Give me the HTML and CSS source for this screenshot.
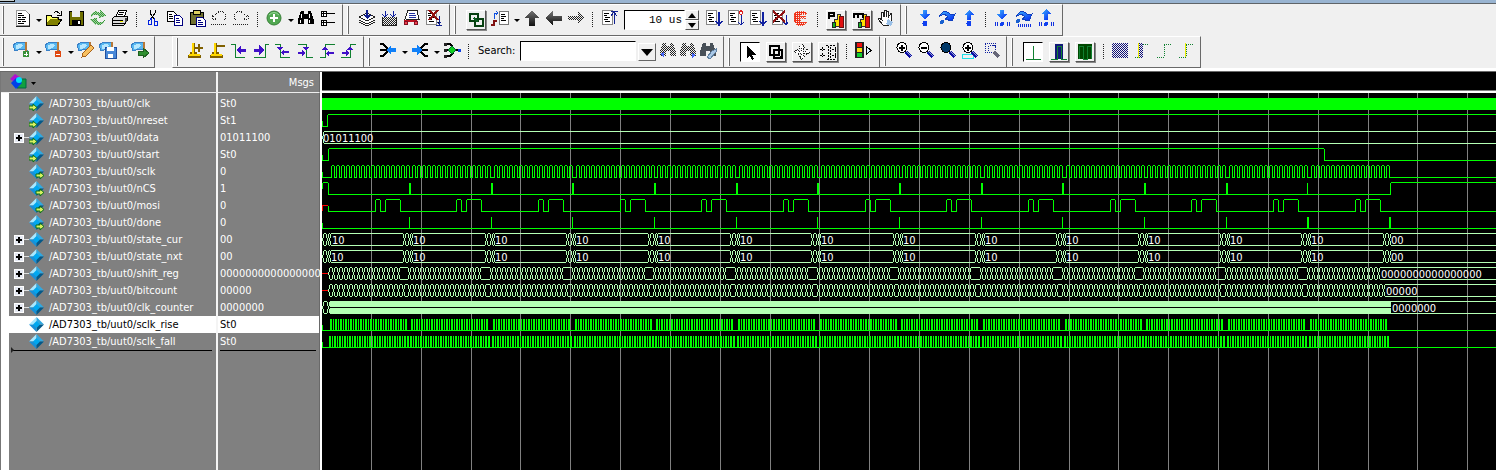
FILE: index.html
```html
<!DOCTYPE html>
<html lang="en">
<head>
<meta charset="utf-8">
<title>Wave</title>
<link rel="stylesheet" href="styles.css">
</head>
<body>
<svg class="defs" aria-hidden="true">
  <defs>
    <pattern id="dither" width="2" height="2" patternUnits="userSpaceOnUse"><path d="M0 0h1v1h-1zM1 1h1v1h-1z" fill="#222"/></pattern>
    <pattern id="dither-green" width="2" height="2" patternUnits="userSpaceOnUse"><path d="M0 0h1v1h-1zM1 1h1v1h-1z" fill="#3a9a3a"/></pattern>
    <pattern id="dither-red" width="2" height="2" patternUnits="userSpaceOnUse"><path d="M0 0h2v1h-1v1h-1z" fill="#f03018"/></pattern>
    <pattern id="dither-navy" width="2" height="2" patternUnits="userSpaceOnUse"><path d="M0 0h1v1h-1zM1 1h1v1h-1z" fill="#101078"/></pattern>
    <linearGradient id="steel" x2="0" y2="1"><stop offset="0" stop-color="#777"/><stop offset="1" stop-color="#111"/></linearGradient>
    <linearGradient id="azure" x2="1" y2="1"><stop offset="0" stop-color="#40b8ff"/><stop offset="1" stop-color="#0020f0"/></linearGradient>
  </defs>
</svg>
<div class="window-edge"><span class="tab"></span></div>
<header class="toolbars">
  <div class="bar" id="bar-main"></div>
  <div class="bar" id="bar-wave"></div>
</header>
<main class="wave-window">
  <section class="signals">
    <table>
      <colgroup><col class="gutter"><col class="names"><col class="values"></colgroup>
      <thead>
        <tr>
          <th colspan="2" class="head-name">
            <button class="object-menu" aria-label="Object filter">
              <svg width="28" height="18" viewBox="0 0 28 18">
                <path d="M1 6L6 1l6 4-4 6z" fill="#b010d0"/><path d="M9 6h8v9H8z" fill="#10a040" stroke="#064"/>
                <path d="M2 10l5-5 6 5-6 6z" fill="#0040e8"/><circle cx="10" cy="7" r="3" fill="#00e0ff"/>
                <path d="M22 9h5l-2.500 3z" fill="#000"/>
              </svg>
            </button>
          </th>
          <th class="head-value">Msgs</th>
        </tr>
      </thead>
      <tbody id="rows"></tbody>
    </table>
    <div class="list-end"><div class="end-name"><span class="marker"></span></div><div class="end-value"></div></div>
  </section>
  <section class="waves">
    <div class="wave-head"></div>
    <svg id="plot" class="plot" role="img" aria-label="Waveforms"></svg>
  </section>
</main>
<script src="app.js"></script>
</body>
</html>
```
FILE: styles.css
```css
* { box-sizing: border-box; }
body {
  margin: 0;
  height: 100vh;
  display: flex;
  flex-direction: column;
  background: #f0f0f0;
  font: 11px/17px "DejaVu Sans Condensed", "Noto Sans", sans-serif;
  color: #000;
  overflow: hidden;
}
button { font: inherit; color: inherit; border: 0; padding: 0; background: none; }
svg { display: block; flex: none; }
.defs { width: 0; height: 0; }

.window-edge { height: 4px; background: #99b4d1; border-bottom: 1px solid #5f6468; flex: none; }
.tab { display: block; width: 15px; height: 2px; background: #c8d0d0; border-right: 1px solid #000; border-bottom: 1px solid #000; }

.toolbars { flex: none; border-bottom: 1px solid #696969; box-shadow: inset 0 -3px #fff; padding-bottom: 3px; }
.bar { display: flex; height: 32px; }
.group {
  display: flex;
  align-items: center;
  flex: none;
  padding: 0 3px 0 4px;
  border: solid;
  border-width: 1px 1px 1px 0;
  border-color: #fff #696969 #696969 #fff;
}
.group.first { padding-left: 2px; }
.group.roomy { padding-right: 5px; }
.group.spaced { margin-left: 17px; border-left-width: 1px; padding-left: 3px; }
.grip { width: 2px; height: 28px; border-left: 1px solid #fff; border-right: 1px solid #696969; margin-right: 7px; }
.group.spaced .grip { margin-right: 6px; }
.tool { width: 22px; height: 24px; padding: 0 1px 4px; flex: none; }
.tool.narrow { width: 20px; padding: 0 0 4px; }
.raised {
  width: 20px; height: 20px; margin: 0 3px; flex: none;
  border: 1px solid; border-color: #fff #555 #555 #fff;
  box-shadow: 1px 1px #888;
}
.raised svg { margin: -1px; }
.raised.sunken { background: #fff; border-color: #000 #fff #fff #000; box-shadow: none; }
.caret { width: 10px; height: 20px; padding: 0 2px 0 3px; flex: none; }
.caret::before { content: ""; display: block; border: solid transparent; border-width: 3px 3px 0; border-top-color: #000; width: 0; }
.sep { width: 1px; height: 16px; margin: 0 5px; flex: none; background: repeating-linear-gradient(#222 0 1px, transparent 1px 2px); }
.field { height: 20px; border: 1px solid; border-color: #000 #fff #fff #000; background: #fff; padding: 0 2px; border-radius: 0; }
.duration { width: 61px; margin-left: 4px; font: 11px "Liberation Mono", monospace; text-align: right; }
.spin { width: 14px; margin: 0 3px 0 0; display: flex; flex-direction: column; }
.spin button { height: 10px; border: 1px solid; border-color: #fff #555 #555 #fff; display: grid; place-items: center; }
.search-label { margin: 0 5px 4px 4px; }
.search { width: 116px; margin: 0 2px 2px 0; }
.drop { width: 18px; height: 18px; border: 1px solid; border-color: #fff #666 #666 #fff; margin-right: 2px; display: grid; place-items: center; }

.wave-window { flex: 1; display: flex; min-height: 0; background: #808080; }
.signals { width: 322px; flex: none; display: flex; flex-direction: column; border-left: 1px solid #777; border-right: 2px solid #fff; color: #fff; }
table { border-collapse: separate; border-spacing: 0; table-layout: fixed; width: 100%; }
th, td { padding: 0; font-weight: normal; text-align: left; height: 17px; white-space: nowrap; }
.gutter { width: 8px; }
.names { width: 209px; }
th { height: 21px; border-bottom: 1px solid #eee; }
th, td.name, td.value { border-right: 2px solid #f4f4f4; }
td.value, th.head-value { border-right: 1px solid #696969; }
.head-value { text-align: right; padding-right: 5px; }
.object-menu { display: block; margin-left: 8px; }
td.edge { background: #fff; }
tbody tr:first-child td { height: 19px; padding-top: 2px; }
.cell { display: flex; align-items: center; height: 17px; }
.expander { width: 10px; height: 10px; margin-left: 5px; border: 1px solid #fff; background: #e4e8f2; display: grid; place-items: center; }
.link { width: 5px; height: 1px; background: #ddd; }
.blank { width: 20px; }
.cell .symbol { margin-right: 4px; }
tbody td.value { padding-left: 2px; }
.selected td { background: #fff; color: #000; }
.list-end { flex: 1; display: flex; border-left: 8px solid #fff; }
.end-name { width: 209px; border-right: 2px solid #f4f4f4; padding: 0 4px 0 2px; }
.marker { display: block; height: 1px; background: #000; }
.marker::before { content: ""; display: block; width: 0; border: solid transparent; border-width: 3px 0 3px 3px; border-left-color: #222; position: relative; top: -3px; }
.end-value { flex: 1; border-right: 1px solid #696969; padding: 0 3px 0 2px; }
.end-value::before { content: ""; display: block; height: 1px; background: #000; }

.waves { flex: 1; min-width: 0; background: #000; display: flex; flex-direction: column; }
.wave-head { height: 21px; flex: none; border-bottom: 2px solid #fff; box-shadow: inset 0 -1px #808080; }
.plot { flex: 1; width: 100%; min-height: 0; }
.plot text { font: 11px "DejaVu Sans Condensed", "Noto Sans", sans-serif; fill: #fff; }
```
FILE: app.js
```js
const page = '<path d="M3 2h10v14H3z" fill="#fff" stroke="#888"/><path d="M5 5h5M5 7h3M6 9h5M5 11h4M6 13h5" stroke="#000"/>';
const waveBlue = '<path d="M1 5l5-3 8 1 1 7-6-1-6 2z" fill="#58b8f0" stroke="#3880c8"/><path d="M4 5l4-1 3 1-2 3-5 1z" fill="#b8e8ff"/><path d="M13 2h2v9l-2 3z" fill="#b87838"/>';
const lens = f => `<circle cx="8" cy="7.500" r="5" fill="${f}" stroke="#000"/><path d="M12 12l5 5" stroke="#1010a8" stroke-width="3"/><path d="M12 11l5 5" stroke="#9ac" stroke-width="1"/>`;
const binoc = f => `<path d="M5 3h3v3h4V3h3l3 9v4h-6v-5H8v5H2v-4z" fill="${f}"/>`;
const magic = s => `<path d="M8 2h4v4h3l-5 6-5-6h3z" fill="url(#azure)"/>${s}`;
const dots = '<path d="M3 14v4M5 14v4M15 14v4M17 14v4" stroke="#1030e0"/>';
const edge = d => `<path d="${d}" fill="none" stroke="#108030"/>`;
const purple = d => `<path d="${d}" fill="#4010c8"/>`;
const bars = l => `<path d="M8 16V9h3V4h3v12z" fill="#ffe000" stroke="#333"/><path d="M6 12h3v5H6z" fill="#10b020" stroke="#222"/><path d="M13 6h4v11h-4z" fill="#e01010" stroke="#611"/>${l}`;

const icons = {
  doc: '<path d="M4 2h9l4 4v11H4z" fill="#fff" stroke="#999"/><path d="M17 6v12H4" stroke="#222" fill="none"/><path d="M6 5h4M6 7h6M6 9h3M10 9h4M6 11h7M6 13h3M10 13h4M6 15h6" stroke="#000"/>',
  open: '<path d="M2 17V7h5l1 2h6v2h4l-4 6z" fill="#808000" stroke="#000"/><path d="M3 14V8h4l1 2h5v1H6z" fill="#ffff60"/><path d="M10 5q3-3 6 1M17 3v4h-4" stroke="#000" fill="none"/>',
  save: '<path d="M3 3h14v14H3z" fill="#707000" stroke="#000"/><path d="M6 3h8v6H6z" fill="#eee"/><path d="M6 12h9v5H6z" fill="#000"/><path d="M12 13h2v3h-2z" fill="#fff"/>',
  refresh: '<path d="M3 7q4-6 9-2V2l6 6-7 2V8Q8 5 3 9zM2 11l7-1v3q4 3 8-1-3 7-9 4v2z" fill="#9fd09f"/><path d="M3 7q4-6 9-2V2l6 6-7 2V8Q8 5 3 9zM2 11l7-1v3q4 3 8-1-3 7-9 4v2z" fill="url(#dither-green)"/>',
  print: '<path d="M6 8l3-6h8l-3 7z" fill="#fff" stroke="#000"/><path d="M9 4h5M8 6h5" stroke="#000"/><path d="M2 11l3-3h12v5l-3 4H2z" fill="#ddd" stroke="#000"/><path d="M3 12h10M3 15h11" stroke="#000"/><path d="M10 13h3v1h-3z" fill="#ee0"/><path d="M15 10h2v4h-2z" fill="#444"/>',
  cut: '<path d="M7 2v3l4 6M12 2v3l-4 6" stroke="#000" fill="none"/><path d="M8 10l-1 2H5v4h3v-5zM11 10l1 3h2v4h-3v-5z" stroke="#0020e0" fill="none"/>',
  copy: '<path d="M2 3h6l3 3v7H2z" fill="#fff" stroke="#000"/><path d="M4 6h3M4 8h4M4 10h4" stroke="#000"/><path d="M9 7h5l3 3v7H9z" fill="#fff" stroke="#000080"/><path d="M11 10h3M11 12h4M11 14h4" stroke="#000080"/>',
  paste: '<path d="M3 4h13v12H3z" fill="#707030" stroke="#000"/><path d="M6 2h7v4H6z" fill="#ddd060" stroke="#000"/><path d="M9 9h6l3 3v6H9z" fill="#fff" stroke="#000080"/><path d="M11 12h3M11 14h5M11 16h5" stroke="#000080"/>',
  undo: '<path d="M3 7l4 4H3zM6 7q5-6 9-2t-1 8M2 16h16" fill="none" stroke="#222" stroke-dasharray="1 1"/>',
  redo: '<path d="M17 7l-4 4h4zM14 7Q9 1 5 5t1 8M2 16h16" fill="none" stroke="#222" stroke-dasharray="1 1"/>',
  add: '<g shape-rendering="auto"><circle cx="10" cy="10" r="7" fill="#52a852" stroke="#388038"/><path d="M5 7q5-5 10 0" stroke="#9d9" fill="none"/></g><path d="M10 6v8M6 10h8" stroke="#fff" stroke-width="2"/>',
  find: binoc('#000') + '<path d="M5 6v4M4 12v3M13 6v4M13 12v3" stroke="#fff"/>',
  expand: '<path d="M3 3h5v5H3zM3 12h5v5H3z" fill="#fff" stroke="#000"/><path d="M8 5h9M8 14h9M4 5h4M5 4v4M4 14h4M5 13v4" stroke="#000"/>',
  compile: '<path d="M2 9l8-4 8 4-8 4zM2 12l8 4 8-4M2 14l8 4 8-4" fill="#fff" stroke="#222"/><path d="M9 2h2v5h3l-4 4-4-4h3z" fill="#102090"/>',
  compileAll: '<path d="M3 9h14v8H3z" fill="url(#dither)"/><path d="M3 9v8h14V9" stroke="#222" fill="none"/><path d="M6 3v5M14 3v5M3 6l3 3 3-3M11 6l3 3 3-3" stroke="#1020a0" fill="none"/>',
  simulate: '<path d="M7 2h9l2 9H6L3 14z" fill="#fff" stroke="#222"/><path d="M8 5h6M8 7h7M8 9h7" stroke="#2030a0"/><path d="M3 13h13" stroke="#c01020" stroke-width="2"/><circle cx="5" cy="15" r="2" fill="#f04050" stroke="#801020"/><circle cx="15" cy="15" r="2" fill="#f04050" stroke="#801020"/>',
  endSim: page + '<path d="M16 8v9M13 17h6M14 14l2 2 2-2" stroke="#102090"/><path d="M6 2l9 10M15 2L6 12" stroke="#901010" stroke-width="2"/>',
  env: '<path d="M4 4h8v7H4zM9 9h8v7H9z" stroke="#064010" stroke-width="2" fill="none"/><path d="M8 8l4 4" stroke="#0a6020" stroke-width="2"/>',
  restart: '<path d="M9 3h9v13H9z" fill="#fff" stroke="#777"/><path d="M11 6h4M11 8h5M11 10h3M11 12h5" stroke="#000"/><path d="M1 17h3v-4h3" stroke="#801010" stroke-width="2" fill="none"/><path d="M4 11V5h4M6 3l2 2-2 2" stroke="#1050e0" fill="none"/>',
  up: '<path d="M10 2l7 8h-4v8H7v-8H3z" fill="url(#steel)"/>',
  left: '<path d="M1 10l8-7v5h9v5H9v4z" fill="url(#steel)"/>',
  right: '<path d="M18 10l-6-6v4H2v4h10v4z" fill="url(#dither)"/>',
  runLen: page + '<path d="M12 3h7M12 8l3-4 3 4M15 4v12" stroke="#102090" fill="none"/>',
  run: page + '<path d="M16 4v12M13 13l3 4 3-4" stroke="#1020a0" stroke-width="1.500" fill="none"/>',
  runCont: page + '<path d="M16 7v10M13 14l3 3 3-3" stroke="#1020a0" fill="none"/><path d="M16 2l2 3-2 2-2-2z" fill="#fff" stroke="#e02020"/>',
  breakSim: page + '<path d="M17 7v9M14 13l3 4 2-3" stroke="#1020a0" fill="none"/><path d="M4 3l12 11M16 3L4 14" stroke="#901010" stroke-width="2"/>',
  stop: '<path d="M6 3h7l3 3h-6L8 8h6v2H8l2 4h6l-3 3H6l-3-3V6z" fill="url(#dither-red)" stroke="#f05030" stroke-dasharray="1 1"/>',
  perf: bars('<path d="M3 9V3h5v3H4" stroke="#000" stroke-width="2" fill="none"/>'),
  mem: bars('<path d="M2 8V4h9v4M6 4v4" stroke="#000" stroke-width="2" fill="none"/>'),
  hand: '<path d="M7 17l-5-6 1-1 3 2L5 4h2l1 5V2h2v7l1-6h2l-1 7 3-5 1 1-1 8-3 4z" fill="#fff" stroke="#222"/><path d="M12 11l5 3-2 4-5-2z" fill="#9ac0e8"/>',
  into: magic('<circle cx="10" cy="15.500" r="2.500" fill="#1040f0"/>'),
  over: '<path d="M2 9Q7-1 14 7l4-1-3 7-7-2 3-2Q7 4 2 9z" fill="url(#azure)" stroke="#1040c0"/><circle cx="5" cy="14" r="2" fill="#1860d0"/>',
  out: '<path d="M10 2l5 5h-3v5H8V7H5z" fill="url(#azure)"/><circle cx="10" cy="15.500" r="2.500" fill="#1040f0"/>',
  into2: magic('<circle cx="10" cy="16" r="2" fill="#1040f0"/>' + dots),
  over2: '<path d="M2 9Q7-1 14 7l4-1-3 7-7-2 3-2Q7 4 2 9z" fill="url(#azure)" stroke="#1040c0"/><circle cx="4" cy="13" r="2" fill="#1860d0"/><path d="M4 17h14" stroke="#1030e0" stroke-width="3" stroke-dasharray="1 1"/>',
  out2: '<path d="M10 1l5 5h-3v6H8V6H5z" fill="url(#azure)"/><circle cx="10" cy="16" r="2" fill="#1040f0"/>' + dots,
  wAdd: waveBlue + '<circle cx="14" cy="14" r="3.500" fill="#389038"/><path d="M14 12v4M12 14h4" stroke="#fff"/>',
  wDel: waveBlue + '<circle cx="14" cy="14" r="3.500" fill="#e04810"/><path d="M12 14h4" stroke="#fff"/>',
  wEdit: waveBlue + '<path d="M6 17l1-4 8-8 3 3-8 8z" fill="#f8c060" stroke="#a86018"/>',
  wSave: waveBlue + '<path d="M7 7h11v11H7z" fill="#4888d8" stroke="#2050a0"/><path d="M9 7h7v4H9zM10 14h5v4h-5z" fill="#fff"/>',
  wGo: waveBlue + '<path d="M8 11h5V8l6 5-6 5v-3H8z" fill="#309030" stroke="#206020"/>',
  curAdd: '<path d="M8 3v11M3 16h13M5 13h7" stroke="#806000" stroke-width="3"/><path d="M8 3v11M4 15h11" stroke="#ffd800" stroke-width="2"/><path d="M9 8h9M14 4v8" stroke="#806000" stroke-width="2"/>',
  curDel: '<path d="M8 3v11M3 16h13M5 13h7" stroke="#806000" stroke-width="3"/><path d="M8 3v11M4 15h11" stroke="#ffd800" stroke-width="2"/><path d="M10 6h8" stroke="#806000" stroke-width="2"/>',
  prevEdge: edge('M2 4h4v13h10') + purple('M7 10l5-5v4h5v3h-5v3z'),
  nextEdge: edge('M3 17h11V4h4') + purple('M13 10L8 5v4H3v3h5v3z'),
  prevFall: edge('M2 4h5v13h10') + purple('M8 12l3-3v2h5v2h-5v3zM4 7h6l-3 4z'),
  nextFall: edge('M3 4h8v13h7') + purple('M10 13l-3-3v2H3v2h4v3zM8 7h6l-3 4z'),
  prevRise: edge('M3 17h5V4h10') + purple('M9 13l3-3v2h5v2h-5v3zM5 10h6L8 6z'),
  nextRise: edge('M2 17h9V4h6') + purple('M10 13l-3-3v2H3v2h4v3zM8 10h6l-3-4z'),
  drivers: '<path d="M2 4h3l4 4v4l-4 4H2M2 10h7" stroke="#000" stroke-width="2" fill="none"/><path d="M8 10l5-5v3h5v4h-5v3z" fill="#1080f8"/>',
  readers: '<path d="M18 4h-3l-4 4v4l4 4h3M11 10h7" stroke="#000" stroke-width="2" fill="none"/><path d="M12 10L7 5v3H2v4h5v3z" fill="#1080f8"/>',
  trace: '<path d="M4 4h4l3 3M4 10h5M4 16h4l3-3M13 10h4" stroke="#000" fill="none" stroke-width="2"/><path d="M2 3h3v3H2zM2 9h3v3H2zM2 15h3v3H2z" fill="#222"/><path d="M10 6l4 4-4 4-4-4z" fill="#10d020" stroke="#063"/><path d="M16 9h3v3h-3z" fill="#1040e0"/>',
  findPrev: binoc('url(#dither)') + '<path d="M2 14l4-2v5z" fill="#4868f8"/>',
  findNext: binoc('url(#dither)') + '<path d="M18 15l-4-2v5z" fill="#4868f8"/>',
  findOpt: binoc('#485058') + '<path d="M9 17l5-6 4-2v3l-6 7z" fill="#a8c8e8" stroke="#6080a0"/>',
  select: '<path d="M7 4v12l3-2 2 4 2-1-2-4h4z" fill="#000"/>',
  zoomMode: '<path d="M4 4h9v9H4zM8 8h8v8H8z" fill="none" stroke="#000" stroke-width="2"/><path d="M12 16h5v-4z"/>',
  pan: '<path d="M10 2l3 4h-2v3h3V7l4 3-4 3v-2h-3v3h2l-3 4-3-4h2v-3H6v2l-4-3 4-3v2h3V6H7z" fill="#fff" stroke="#222" stroke-dasharray="1 1"/>',
  edit: '<path d="M8 3h2v14H8M12 3h5M12 17h5M12 5v12M17 5v12M2 7h5M4 5v4M2 13h5M4 11v4M14 7h4M14 13h4" fill="none" stroke="#000" stroke-dasharray="2 1"/>',
  light: '<path d="M2 2h9v16H2z" fill="#222"/><circle cx="6.500" cy="5" r="2.500" fill="#f01010"/><circle cx="6.500" cy="10" r="2.500" fill="#f8e010"/><circle cx="6.500" cy="15" r="2.500" fill="#10d030"/><path d="M13 6v9l5-4.500z" fill="#d8f0ff" stroke="#000"/>',
  zin: lens('#fff') + '<path d="M5 8h6M8 5v6" stroke="#000" stroke-width="2"/>',
  zout: lens('#fff') + '<path d="M5 8h6" stroke="#000" stroke-width="2"/>',
  zfull: lens('#003868'),
  zcur: '<path d="M2 14h11v4H2z" fill="none" stroke="#20e0e8"/>' + lens('#fff') + '<path d="M5 8h6M8 5v6" stroke="#000" stroke-width="2"/>',
  zarea: '<path d="M3 3h10v9H3z" fill="none" stroke="#1020a0" stroke-dasharray="1 1"/><circle cx="10" cy="9" r="4" fill="#eee" stroke="#1020a0" stroke-dasharray="1 1"/><path d="M12 12l5 5" stroke="#667" stroke-width="3"/>',
  m1: edge('M3 17h15M10 4v13'),
  m2: '<path d="M6 2h8v15H6z" fill="#101878"/>' + edge('M2 17h6V4h4v13h6'),
  m3: '<path d="M3 2h14v15H3z" fill="#004800"/>' + edge('M4 17V4h4v13h4V4h4v13'),
  m4: '<path d="M2 3h16v15H2z" fill="url(#dither-navy)"/>',
  m5: '<path d="M7 3h4v15H7z" fill="url(#dither-navy)"/><path d="M6 3v15" stroke="#ee0"/><path d="M3 17h5M11 4h5" stroke="#108030" stroke-dasharray="1 1"/>',
  m6: '<path d="M3 17h7V4h7" fill="none" stroke="#108030" stroke-dasharray="1 1"/>',
  m7: '<path d="M9 3v15" stroke="#ee0"/><path d="M3 17h7V4h7" fill="none" stroke="#108030" stroke-dasharray="1 1"/>'
};

const svg = n => `<svg width="20" height="20" viewBox="0 0 20 20" shape-rendering="crispEdges">${icons[n]}</svg>`;
const tri = d => `<svg width="8" height="5" viewBox="0 0 8 5"><path d="${d}"/></svg>`;
const widgets = {
  v: '<button class="caret" aria-label="More"></button>',
  '|': '<span class="sep"></span>',
  duration: '<input class="field duration" aria-label="Run length" value="10 us">' +
    `<span class="spin"><button aria-label="Increase">${tri('M4 0l4 5H0z')}</button><button aria-label="Decrease">${tri('M0 0h8L4 5z')}</button></span>`,
  search: '<label class="search-label" for="search">Search:</label><input class="field search" id="search">' +
    '<button class="drop" aria-label="Search history"><svg width="12" height="7" viewBox="0 0 12 7"><path d="M0 0h12L6 7z"/></svg></button>'
};
function item(t) {
  if (widgets[t]) return widgets[t];
  const kind = { '^': 'raised', '_': 'raised sunken', '-': 'tool narrow' }[t[0]];
  const name = kind ? t.slice(1) : t;
  return `<button class="${kind || 'tool'}" aria-label="${name}">${svg(name)}</button>`;
}
const group = ([cls, list]) => `<div class="group ${cls}"><span class="grip"></span>${list.split(' ').map(item).join('')}</div>`;
document.getElementById('bar-main').innerHTML = [
  ['first', 'doc v open save refresh print | cut copy paste undo redo | add v find expand'],
  ['roomy', 'compile compileAll simulate endSim'],
  ['', '^env restart v up left right | runLen duration run runCont run breakSim stop | ^perf ^mem hand'],
  ['roomy', 'into over out | into2 over2 out2']
].map(group).join('');
document.getElementById('bar-wave').innerHTML = [
  ['first', 'wAdd v wDel v wEdit wSave v wGo'],
  ['spaced', 'curAdd curDel prevEdge nextEdge prevFall nextFall prevRise nextRise'],
  ['roomy', 'drivers v readers v trace | search -findPrev -findNext -findOpt'],
  ['roomy', '_select ^zoomMode ^pan ^edit | light'],
  ['', 'zin zout zfull zcur zarea'],
  ['', '_m1 ^m2 ^m3 | m4 m5 m6 m7']
].map(group).join('');

const signals = [
  ['clk', 'St0', 'in'], ['nreset', 'St1', 'in'], ['data', '01011100', 'in', 1], ['start', 'St0', 'in'],
  ['sclk', '0', 'out'], ['nCS', '1', 'out'], ['mosi', '0', 'out'], ['done', '0', 'out'],
  ['state_cur', '00', '', 1], ['state_nxt', '00', '', 1], ['shift_reg', '0000000000000000', '', 1],
  ['bitcount', '00000', '', 1], ['clk_counter', '0000000', '', 1], ['sclk_rise', 'St0', ''], ['sclk_fall', 'St0', '']
];
const gem = port => `<svg class="symbol" width="16" height="16" viewBox="0 0 16 16">
<path d="M7.500 0L0 7.500h7.500z" fill="#a8e8ff"/><path d="M7.500 0L15 7.500H7.500z" fill="#30a8e0"/><path d="M0 7.500L7.500 15V7.500z" fill="#1890d8"/><path d="M15 7.500L7.500 15V7.500z" fill="#045888"/><path d="M7.500 4L11 7.500 7.500 11 4 7.500z" fill="#00a8f0"/>
${port ? `<path transform="translate(${port === 'in' ? 0 : 7} 8)" d="M0 2h4V0l4 3.500L4 7V5H0z" fill="#d8f060" stroke="#087018"/>` : ''}</svg>`;
document.getElementById('rows').innerHTML = signals.map(([n, v, port, bus]) =>
  `<tr class="${n === 'sclk_rise' ? 'selected' : ''}"><td class="edge"></td><td class="name"><div class="cell">${
    bus ? '<button class="expander" aria-label="Expand"><svg width="6" height="6" viewBox="0 0 6 6"><path d="M2 0h2v2h2v2H4v2H2V4H0V2h2z"/></svg></button><span class="link"></span>' : '<span class="blank"></span>'
  }${gem(port)}/AD7303_tb/uut0/${n}</div></td><td class="value">${v}</td></tr>`).join('');

/* Plot coordinates: x counts from the window's left edge, y from the top of the first lane. */
const FAR = 4000, FRAME = 81.67, FRAMES = 13;
const layers = { grid: '', green: '', bus: '', red: '', dark: '' };
const labels = [];
const box = (c, x, y, w, h) => { layers[c] += `M${x} ${y}h${w}v${h}h${-w}z`; };
const hi = i => 17 * i + 4, lo = i => 17 * i + 16;
const line = (i, y, a, b, c = 'green') => box(c, a, y, b - a, 1);
const rise = (i, x, c = 'green') => box(c, x, hi(i) + 1, 1, 12);
const at = (base, k) => Math.floor(base + FRAME * k);
const tick = i => box('green', 322, lo(i) - 5, 1, 5);

for (let k = 0; k < 80; k++) box('grid', Math.round(371 + 49.83 * k), 0, 1, FAR);
box('green', 322, 5, FAR, 12);
tick(1); line(1, lo(1), 322, 328); rise(1, 327); line(1, hi(1), 328, FAR);
tick(3); line(3, lo(3), 322, 329); rise(3, 328); line(3, hi(3), 329, 1324); rise(3, 1324); line(3, lo(3), 1324, FAR);

tick(4);
let last = 322;
for (let k = 0; k < FRAMES; k++) for (let j = 0; j < 16; j++) {
  const x = at(331.200, k) + Math.round(j * 4.98);
  line(4, lo(4), last, x); rise(4, x); box('green', x + 1, hi(4), 2, 1); rise(4, x + 3);
  last = x + 3;
}
line(4, lo(4), last, FAR);

box('green', 322, hi(5) + 1, 1, 6); line(5, hi(5), 323, 328); rise(5, 328); line(5, lo(5), 328, 1390); rise(5, 1390); line(5, hi(5), 1391, FAR);
for (let k = 0; k < 12; k++) box('green', at(409.600, k), hi(5) + 1, k < 11 ? 2 : 1, 12);

box('red', 322, hi(6) + 6, 1, 6); line(6, hi(6) + 6, 323, 328, 'red'); box('green', 328, hi(6) + 7, 1, 6);
last = 328;
for (let k = 0; k < FRAMES; k++) {
  const x = at(375.100, k);
  for (const [a, b] of [[x, x + 5], [x + 10, x + 25]]) {
    line(6, lo(6), last, a); rise(6, a); line(6, hi(6), a + 1, b); rise(6, b); last = b;
  }
}
line(6, lo(6), last, FAR);

tick(7); line(7, lo(7), 322, FAR);
for (let k = 0; k < FRAMES; k++) box('green', at(409.600, k), hi(7) + 1, k > 10 ? 2 : 1, 12);

function bus(i, cuts, end = FAR) {
  let from = cuts[0];
  for (const x of cuts) {
    if (x > from) for (const y of [hi(i), lo(i)]) line(i, y, from + 2, Math.max(from + 3, x - 1), 'bus');
    for (const dx of x === cuts[0] ? [1] : [-1, 1]) { box('bus', x + dx, hi(i) + 1, 1, 4); box('bus', x + dx, lo(i) - 4, 1, 4); }
    box('bus', x, hi(i) + 5, 1, 3);
    from = x;
  }
  for (const y of [hi(i), lo(i)]) line(i, y, from + 2, end, 'bus');
}
const label = (i, x, s) => labels.push(`<text x="${x}" y="${17 * i + 15}">${s}</text>`);
bus(2, [322]); label(2, 323, '01011100');
for (const i of [8, 9]) {
  const cuts = [322, 327, 329];
  label(i, i === 8 ? 332 : 331, '10');
  for (let k = 0; k < FRAMES; k++) {
    const x = at(404.600, k);
    cuts.push(x, x + 5);
    if (k < 12) { cuts.push(x + 7); label(i, x + 9, '10'); } else label(i, x + 7, '00');
  }
  bus(i, cuts);
}
const shift = [], count = [];
for (let k = 0; k < FRAMES; k++) for (let j = 0; j < 16; j++) {
  const x = at(328, k) + 5 * j;
  if (j < 15) shift.push(x);
  if (x < 1388) count.push(x);
}
bus(10, shift); bus(11, count);
for (const i of [10, 11]) line(i, hi(i) + 6, 322, 328, 'red');
label(10, 1381, '0000000000000000'); label(11, 1386, '00000');
bus(12, [322, 328]);
box('bus', 330, hi(12), 1061, 13); box('dark', 330, hi(12) + 6, 1061, 1);
label(12, 1392, '0000000');

for (const i of [13, 14]) {
  tick(i); line(i, lo(i), 322, FAR);
  for (let k = 0; k < FRAMES; k++) for (let j = 0; j < 16; j++) {
    const x = at(i === 13 ? 330.200 : 329.200, k) + 5 * j;
    box('green', x, hi(i) + 1, 2, 12);
    if (i === 14 || j < 15) box('green', x + 3, hi(i) + 1, 1, 12);
    if (i === 14 && j === 15) box('green', x + 4, hi(i) + 1, 1, 12);
  }
}
const fill = { grid: '#808080', green: '#00ff00', bus: '#b4ffb4', red: '#ff0000', dark: '#000' };
document.getElementById('plot').innerHTML = '<g transform="translate(-322 0)">' +
  Object.keys(layers).map(c => `<path d="${layers[c]}" fill="${fill[c]}"/>`).join('') + labels.join('') + '</g>';
```
